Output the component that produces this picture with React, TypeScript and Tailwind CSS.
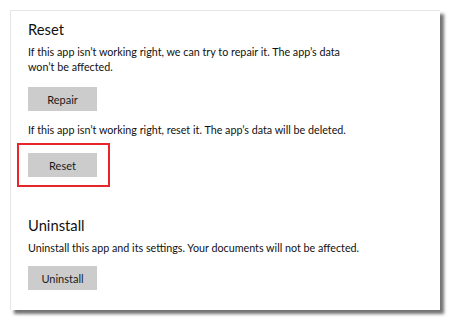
import React from 'react';

const Btn: React.FC<{ label: string }> = ({ label }) => (
  <button className="block w-[69px] h-6 bg-[#cccccc] text-[11px] text-[#1a1a1a] leading-none">{label}</button>
);

export default function App() {
  return (
    <div className="w-[451px] h-[321px] bg-white pt-[10px] pl-[10px] font-['Lato',sans-serif] text-[#111]">
      <div className="relative w-[430px] h-[300px] bg-white border-t border-l border-[#e6e6e6] shadow-[4px_4px_3px_rgba(0,0,0,0.55)] pl-[17px] pt-2">
        <h2 className="text-[14.75px] leading-5 font-normal">Reset</h2>
        <p className="mt-[5px] text-[10.75px] leading-[15px] w-[325px]">
          If this app isn’t working right, we can try to repair it. The app’s data won’t be affected.
        </p>
        <div className="mt-[13px]">
          <Btn label="Repair" />
        </div>
        <p className="mt-[11px] text-[10.75px] leading-[15px]">
          If this app isn’t working right, reset it. The app’s data will be deleted.
        </p>
        <div className="relative mt-4 w-[69px]">
          <Btn label="Reset" />
          <div className="absolute -left-[11px] -top-[10px] w-[93px] h-[44px] border-2 border-[#e8262a]" />
        </div>
        <h2 className="mt-[38px] text-[14.75px] leading-5 font-normal">Uninstall</h2>
        <p className="mt-[5px] text-[10.75px] leading-[15px]">
          Uninstall this app and its settings. Your documents will not be affected.
        </p>
        <div className="mt-[11px]">
          <Btn label="Uninstall" />
        </div>
      </div>
    </div>
  );
}
